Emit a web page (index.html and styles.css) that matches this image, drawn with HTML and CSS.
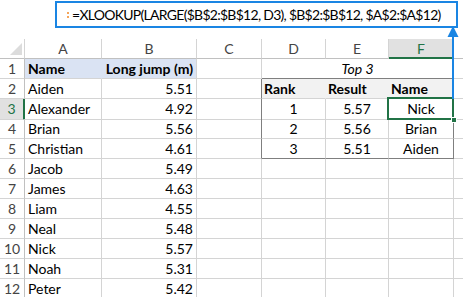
FILE: index.html
```html
<!DOCTYPE html>
<html lang="en">
<head>
  <meta charset="UTF-8">
  <title>XLOOKUP Top 3</title>
  <link rel="stylesheet" href="styles.css">
</head>
<body>
  <div class="formula-bar"><span class="grip"></span>=XLOOKUP(LARGE($B$2:$B$12, D3), $B$2:$B$12, $A$2:$A$12)</div>

  <svg class="arrow" width="12" height="74" viewBox="0 0 12 74">
    <line x1="6" y1="9" x2="6" y2="73" stroke="#1a85e3" stroke-width="2"/>
    <polygon points="6,0 0.5,11 11.5,11" fill="#1a85e3"/>
  </svg>

  <div class="sheet">
    <div class="row head-row">
      <div class="cell corner"><span class="tri"></span></div>
      <div class="cell col-head">A</div>
      <div class="cell col-head">B</div>
      <div class="cell col-head">C</div>
      <div class="cell col-head">D</div>
      <div class="cell col-head">E</div>
      <div class="cell col-head active">F</div>
      <div class="cell col-head last"></div>
    </div>

    <div class="row">
      <div class="cell row-head">1</div>
      <div class="cell title-fill">Name</div>
      <div class="cell title-fill num">Long jump (m)</div>
      <div class="cell"></div>
      <div class="cell top3">Top 3</div>
      <div class="cell last"></div>
    </div>

    <div class="row">
      <div class="cell row-head">2</div>
      <div class="cell">Aiden</div>
      <div class="cell num">5.51</div>
      <div class="cell tb-left"></div>
      <div class="cell tb-head">Rank</div>
      <div class="cell tb-head">Result</div>
      <div class="cell tb-head tb-right">Name</div>
      <div class="cell last"></div>
    </div>

    <div class="row">
      <div class="cell row-head active">3</div>
      <div class="cell">Alexander</div>
      <div class="cell num">4.92</div>
      <div class="cell tb-left"></div>
      <div class="cell mid">1</div>
      <div class="cell mid">5.57</div>
      <div class="cell mid tb-right selected">Nick<span class="handle"></span></div>
      <div class="cell last"></div>
    </div>

    <div class="row">
      <div class="cell row-head">4</div>
      <div class="cell">Brian</div>
      <div class="cell num">5.56</div>
      <div class="cell tb-left"></div>
      <div class="cell mid">2</div>
      <div class="cell mid">5.56</div>
      <div class="cell mid tb-right">Brian</div>
      <div class="cell last"></div>
    </div>

    <div class="row">
      <div class="cell row-head">5</div>
      <div class="cell">Christian</div>
      <div class="cell num">4.61</div>
      <div class="cell tb-left"></div>
      <div class="cell mid tb-bottom">3</div>
      <div class="cell mid tb-bottom">5.51</div>
      <div class="cell mid tb-right tb-bottom">Aiden</div>
      <div class="cell last"></div>
    </div>

    <div class="row">
      <div class="cell row-head">6</div>
      <div class="cell">Jacob</div>
      <div class="cell num">5.49</div>
      <div class="cell"></div><div class="cell"></div><div class="cell"></div><div class="cell"></div>
      <div class="cell last"></div>
    </div>

    <div class="row">
      <div class="cell row-head">7</div>
      <div class="cell">James</div>
      <div class="cell num">4.63</div>
      <div class="cell"></div><div class="cell"></div><div class="cell"></div><div class="cell"></div>
      <div class="cell last"></div>
    </div>

    <div class="row">
      <div class="cell row-head">8</div>
      <div class="cell">Liam</div>
      <div class="cell num">4.55</div>
      <div class="cell"></div><div class="cell"></div><div class="cell"></div><div class="cell"></div>
      <div class="cell last"></div>
    </div>

    <div class="row">
      <div class="cell row-head">9</div>
      <div class="cell">Neal</div>
      <div class="cell num">5.48</div>
      <div class="cell"></div><div class="cell"></div><div class="cell"></div><div class="cell"></div>
      <div class="cell last"></div>
    </div>

    <div class="row">
      <div class="cell row-head">10</div>
      <div class="cell">Nick</div>
      <div class="cell num">5.57</div>
      <div class="cell"></div><div class="cell"></div><div class="cell"></div><div class="cell"></div>
      <div class="cell last"></div>
    </div>

    <div class="row">
      <div class="cell row-head">11</div>
      <div class="cell">Noah</div>
      <div class="cell num">5.31</div>
      <div class="cell"></div><div class="cell"></div><div class="cell"></div><div class="cell"></div>
      <div class="cell last"></div>
    </div>

    <div class="row">
      <div class="cell row-head">12</div>
      <div class="cell">Peter</div>
      <div class="cell num">5.42</div>
      <div class="cell"></div><div class="cell"></div><div class="cell"></div><div class="cell"></div>
      <div class="cell last"></div>
    </div>
  </div>
</body>
</html>
```

FILE: styles.css
```css
body {
  margin: 0;
  background: #ffffff;
  color: #000000;
  font-family: Lato, "Liberation Sans", sans-serif;
  position: relative;
}
.formula-bar {
  margin: 1px 0 0 55px;
  width: 403px;
  height: 27px;
  box-sizing: border-box;
  border: 2px solid #1a85e3;
  padding-left: 10px;
  display: flex;
  align-items: center;
  font-size: 14px;
  letter-spacing: -0.72px;
  white-space: nowrap;
  overflow: hidden;
}
.grip {
  width: 0;
  height: 6px;
  border-left: 2px dotted #f5a55a;
  margin-right: 3px;
}
.arrow {
  position: absolute;
  left: 447px;
  top: 26px;
  z-index: 2;
}
.sheet {
  margin-top: 11px;
}
.row {
  display: grid;
  grid-template-columns: 25px 77px 95px 65px 64px 63px 65px 9px;
  height: 20px;
}
.cell {
  box-sizing: border-box;
  border-right: 1px solid #d4d4d4;
  border-bottom: 1px solid #d4d4d4;
  font-size: 14px;
  line-height: 20px;
  padding: 0 3px;
  white-space: nowrap;
  overflow: hidden;
}
.cell.last {
  border-right: none;
}
.head-row .cell {
  border-bottom: 1px solid #c0c0c0;
  color: #444444;
  text-align: center;
  line-height: 19px;
}
.corner {
  position: relative;
}
.tri {
  position: absolute;
  right: 2px;
  bottom: 3px;
  width: 0;
  height: 0;
  border-left: 12px solid transparent;
  border-bottom: 12px solid #dcdcdc;
}
.col-head.active {
  background: #e1e1e1;
  color: #217346;
  border-bottom: 2px solid #217346;
}
.row-head {
  text-align: center;
  color: #444444;
  padding: 0;
  border-right: 1px solid #c0c0c0;
}
.row-head.active {
  background: #e1e1e1;
  color: #217346;
  border-right: 2px solid #217346;
}
.num {
  text-align: right;
}
.mid {
  text-align: center;
}
.title-fill {
  background: #dae3f3;
  border-right-color: #dae3f3;
  font-weight: bold;
}
.title-fill.num {
  border-right-color: #d4d4d4;
}
.top3 {
  grid-column: span 3;
  text-align: center;
  font-style: italic;
  border-bottom: 1px solid #7f7f7f;
  border-right: 1px solid #d4d4d4;
}
.tb-left {
  border-right: 1px solid #7f7f7f;
}
.tb-right {
  border-right: 1px solid #7f7f7f;
}
.tb-bottom {
  border-bottom: 1px solid #7f7f7f;
}
.tb-head {
  background: #f2f2f2;
  border-right-color: #f2f2f2;
  font-weight: bold;
  padding-left: 2px;
}
.tb-head.tb-right {
  border-right-color: #7f7f7f;
}
.selected {
  position: relative;
  overflow: visible;
}
.selected::after {
  content: "";
  position: absolute;
  left: -2px;
  top: -2px;
  right: -1px;
  bottom: -1px;
  border: 2px solid #217346;
}
.handle {
  position: absolute;
  right: -4px;
  bottom: -4px;
  width: 6px;
  height: 6px;
  background: #217346;
  border: 1px solid #ffffff;
  box-sizing: border-box;
  z-index: 1;
}
```
